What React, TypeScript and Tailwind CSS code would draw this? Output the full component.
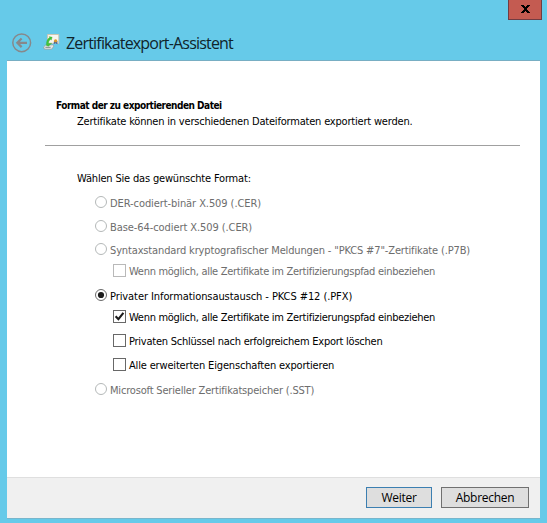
import React, { useState } from 'react';

interface OptionProps {
  label: string;
  checked?: boolean;
  disabled?: boolean;
  className: string;
  labelClassName: string;
  onSelect?: () => void;
}

const RadioOption: React.FC<OptionProps> = ({ label, checked, disabled, className, labelClassName, onSelect }) => (
  <div className={`flex h-[13px] ml-[50px] ${className}`} onClick={disabled ? undefined : onSelect}>
    <svg className="w-3 h-3 shrink-0" viewBox="0 0 12 12">
      <circle cx="6" cy="6" r="5.5" fill="#fff" stroke={disabled ? '#b4b8b8' : '#6b6b6b'} />
      {checked && <circle cx="6" cy="6" r="3.1" fill="#1c1c1c" />}
    </svg>
    <span className={`ml-[3px] whitespace-nowrap leading-4 ${disabled ? 'text-[#6d6d6d]' : 'text-black'} ${labelClassName}`}>{label}</span>
  </div>
);

const CheckOption: React.FC<OptionProps> = ({ label, checked, disabled, className, labelClassName, onSelect }) => (
  <div className={`flex h-[13px] ml-[68px] ${className}`} onClick={disabled ? undefined : onSelect}>
    <svg className="w-[13px] h-[13px] shrink-0" viewBox="0 0 13 13">
      <rect x="0.5" y="0.5" width="12" height="12" fill="#fff" stroke={disabled ? '#b9b9b9' : '#686868'} />
      {checked && <path d="M2.6 6.2L5.4 9.2L10.4 2.8" fill="none" stroke="#1c1c1c" strokeWidth="2.1" />}
    </svg>
    <span className={`ml-[3px] whitespace-nowrap leading-4 ${disabled ? 'text-[#6d6d6d]' : 'text-black'} ${labelClassName}`}>{label}</span>
  </div>
);

const CertificateIcon = () => (
  <svg className="w-[17px] h-4" viewBox="0 0 17 16">
    {/* certificate sheet with seal */}
    <path d="M4.6 0.5H15.8V9.4H4.6Z" fill="#f8f5ee" stroke="#cfc4ac" strokeWidth="0.9" />
    <path d="M11 7L10.6 10.2L12.4 9.2L14.4 10.2V7Z" fill="#2a5fae" />
    <circle cx="12.6" cy="6.9" r="1.7" fill="#d9962b" />
    {/* drive */}
    <path d="M0.6 13L2.8 10.9H9.6L11 12L8.6 15.2H1.4Z" fill="#e3e7e6" stroke="#929b99" strokeWidth="0.7" />
    <path d="M2.4 13.3H7.6" stroke="#66706e" strokeWidth="0.8" />
    {/* arrow */}
    <path d="M3.4 11.4C3.2 7.6 4.2 5 6.6 3.6L6.2 2.6L9.2 3.2L8.2 6.2L7.6 5.2C6 6.4 5.5 8 5.6 9.4L8.8 9.2L5.4 12.2Z" fill="#43c338" stroke="#2da632" strokeWidth="0.3" />
  </svg>
);

const App: React.FC = () => {
  const [includeChain, setIncludeChain] = useState(true);
  const [deleteKey, setDeleteKey] = useState(false);
  const [exportProps, setExportProps] = useState(false);

  return (
    <div className="w-[547px] h-[523px] overflow-hidden bg-[#66cae9] flex flex-col px-[7px] font-['DejaVu_Sans_Condensed','DejaVu_Sans',sans-serif] font-stretch-condensed text-[11px]">
      {/* Title bar */}
      <div className="h-5 shrink-0 flex justify-end -mr-0.5">
        <button className="w-[34px] h-5 bg-[#c45b51] border border-t-0 border-[#713c42] flex items-center justify-center" aria-label="Schließen">
          <svg className="w-[9px] h-2 mt-[-2px]" viewBox="0 0 9 8" shapeRendering="crispEdges">
            <path d="M0 0H3L4.5 2L6 0H9V1H8L6 4L8 7H9V8H6L4.5 6L3 8H0V7H1L3 4L1 1H0Z" fill="#000" />
          </svg>
        </button>
      </div>

      {/* Header */}
      <div className="h-10 shrink-0 flex items-center pl-[5px] pt-[5px]">
        <svg className="w-5 h-5" viewBox="0 0 20 20" fill="none" stroke="#87888b">
          <circle cx="9.7" cy="9.8" r="8.9" strokeWidth="1.5" />
          <path d="M15 9.8H5.5M9.6 5.5L5.3 9.8L9.6 14.1" strokeWidth="2.2" />
        </svg>
        <div className="ml-[11px] mb-[2px]"><CertificateIcon /></div>
        <h1 className="ml-[6px] whitespace-nowrap font-['Open_Sans',sans-serif] font-stretch-normal text-[16px] leading-5 tracking-[-0.82px] text-[#10242b]">Zertifikatexport-Assistent</h1>
      </div>

      {/* Wizard page */}
      <div className="w-[533px] h-[417px] shrink-0 bg-white border-t border-[#78aec3] pl-[38px]">
        <h2 className="mt-[38px] ml-[11px] whitespace-nowrap font-bold text-[10px] leading-[14px] tracking-[-0.5px]">Format der zu exportierenden Datei</h2>
        <p className="mt-[2px] ml-8 whitespace-nowrap leading-[14px] tracking-[-0.195px]">Zertifikate können in verschiedenen Dateiformaten exportiert werden.</p>
        <hr className="mt-[16px] w-[475px] border-t border-[#a0a0a0]" />
        <p className="mt-[26px] ml-8 whitespace-nowrap leading-[14px] tracking-[-0.18px]">Wählen Sie das gewünschte Format:</p>

        <RadioOption className="mt-[10px]" labelClassName="tracking-[-0.08px]" label="DER-codiert-binär X.509 (.CER)" disabled />
        <RadioOption className="mt-[11px]" labelClassName="tracking-[-0.08px]" label="Base-64-codiert X.509 (.CER)" disabled />
        <RadioOption className="mt-[10px]" labelClassName="tracking-[-0.145px]" label={'Syntaxstandard kryptografischer Meldungen - "PKCS #7"-Zertifikate (.P7B)'} disabled />
        <CheckOption className="mt-[8px]" labelClassName="tracking-[-0.285px]" label="Wenn möglich, alle Zertifikate im Zertifizierungspfad einbeziehen" disabled />
        <RadioOption className="mt-[12px]" labelClassName="tracking-[-0.08px]" label="Privater Informationsaustausch - PKCS #12 (.PFX)" checked />
        <CheckOption className="mt-[8px]" labelClassName="tracking-[-0.285px]" label="Wenn möglich, alle Zertifikate im Zertifizierungspfad einbeziehen" checked={includeChain} onSelect={() => setIncludeChain(!includeChain)} />
        <CheckOption className="mt-[11px]" labelClassName="tracking-[-0.24px]" label="Privaten Schlüssel nach erfolgreichem Export löschen" checked={deleteKey} onSelect={() => setDeleteKey(!deleteKey)} />
        <CheckOption className="mt-[11px]" labelClassName="tracking-[-0.17px]" label="Alle erweiterten Eigenschaften exportieren" checked={exportProps} onSelect={() => setExportProps(!exportProps)} />
        <RadioOption className="mt-[12px]" labelClassName="tracking-[-0.18px]" label="Microsoft Serieller Zertifikatspeicher (.SST)" disabled />
      </div>

      {/* Footer buttons */}
      <div className="h-[42px] shrink-0 bg-[#f0f0f0] border-t border-t-[#dfdfdf] border-b border-b-[#78b6cc] flex justify-end gap-[9px] pt-[9px] pr-[11px] font-['Open_Sans',sans-serif] text-[12px] tracking-[-0.3px]">
        <button className="w-[66px] h-[21px] bg-[#dedede] border border-[#3c7fb1] font-stretch-normal leading-[19px]">Weiter</button>
        <button className="w-[88px] h-[21px] bg-[#dedede] border border-[#707070] font-stretch-normal leading-[19px]">Abbrechen</button>
      </div>
    </div>
  );
};

export default App;
